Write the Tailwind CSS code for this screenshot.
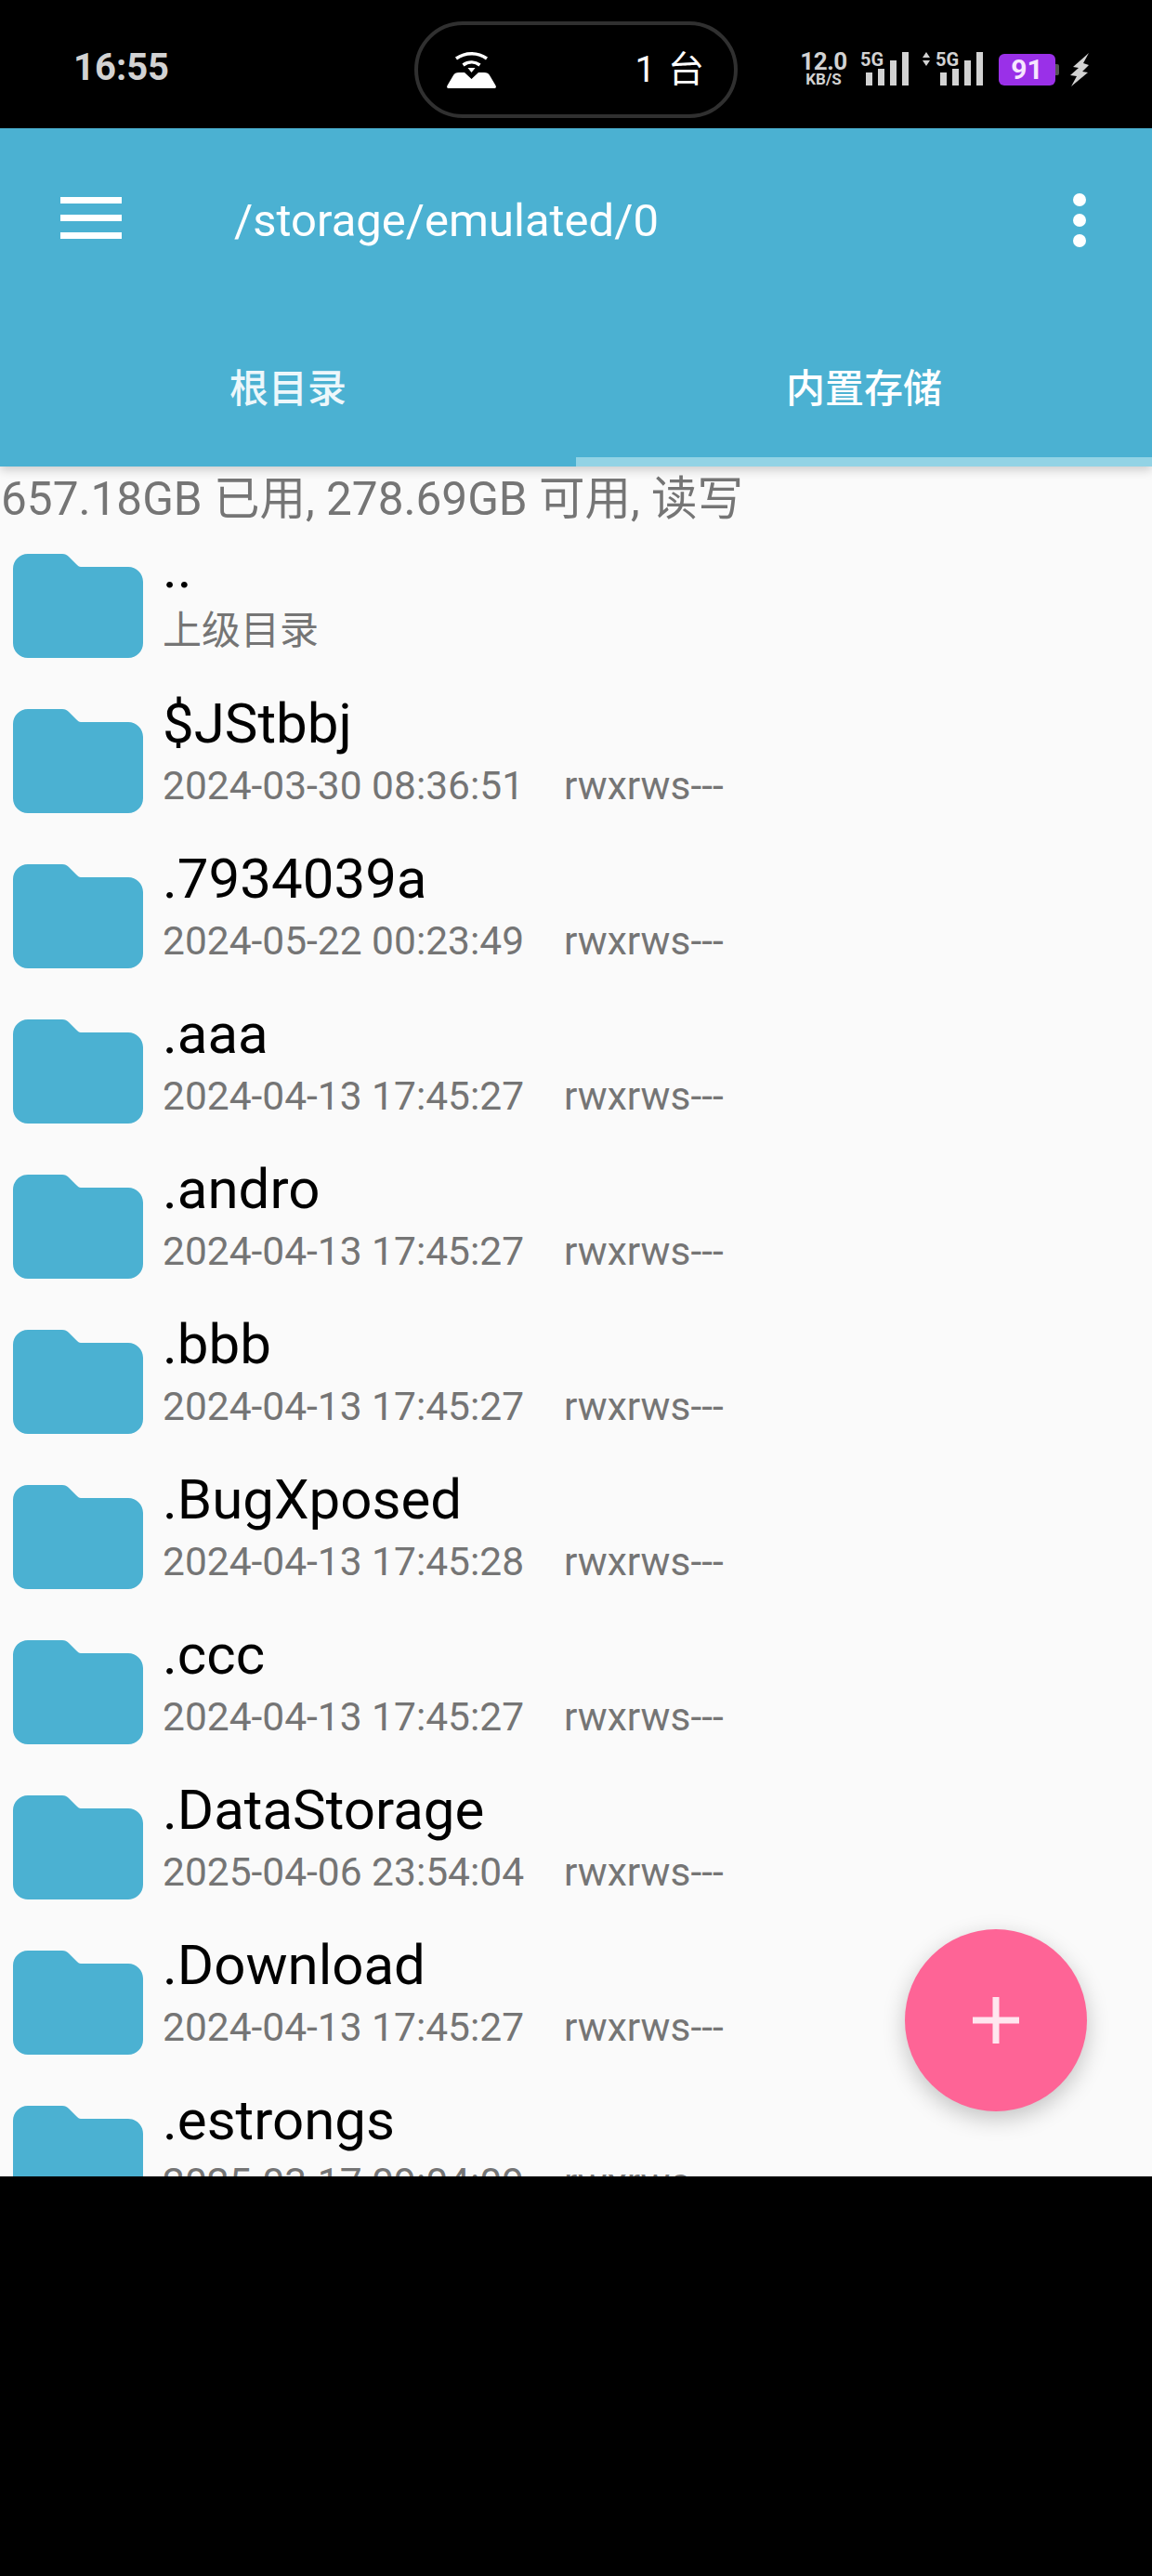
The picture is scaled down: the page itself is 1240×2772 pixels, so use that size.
<!DOCTYPE html>
<html><head><meta charset="utf-8"><script src="https://cdn.jsdelivr.net/npm/@tailwindcss/browser@4"></script></head>
<body class="m-0 bg-black">
<div class="relative w-[1240px] h-[2772px] bg-black overflow-hidden font-['Roboto','Noto_Sans_CJK_SC',sans-serif]">
  <div class="relative h-[138px] flex items-center">
    <span class="ml-[79px] mt-[8px] text-[40px] leading-none font-bold text-[#d2d2d2] font-['Roboto',sans-serif]">16:55</span>
    <div class="absolute left-[446px] top-[23px] w-[348px] h-[104px] rounded-[52px] border-[4px] border-[#303030] flex items-center justify-between pl-[31px] pr-[30px]">
      <svg width="53" height="39" viewBox="0 0 53 39"><path d="M10 7C20 0 33 0 43 7" fill="none" stroke="#fff" stroke-width="3.5"/><path d="M17.500 14C23 10 30 10 35.500 14" fill="none" stroke="#fff" stroke-width="3.5"/><path d="M22.500 17h8l-4 5z" fill="#fff"/><path d="M13 22h6l7.500 7 7.500-7h6c3 0 5 1 6 3l6.500 11c1 2 0 3-2 3H2.500c-2 0-3-1-2-3L7 25c1-2 3-3 6-3z" fill="#fff"/></svg>
      <span class="text-[39px] leading-none text-white tracking-[2px] whitespace-nowrap">1 台</span>
    </div>
    <div class="absolute left-[858px] top-[54px] w-[57px] flex flex-col items-center font-bold text-[#d2d2d2] font-['Roboto',sans-serif]">
      <span class="text-[26px] leading-[24px] tracking-[-0.5px]">12.0</span>
      <span class="text-[17px] leading-[14px]">KB/S</span>
    </div>
    <div class="absolute left-[926px] top-[56px] w-[52px] h-[36px]">
      <span class="absolute left-0 top-0 text-[20px] leading-[17px] font-bold text-[#d2d2d2]">5G</span>
      <div class="absolute right-0 bottom-0 flex items-end gap-[6px]">
        <i class="block w-[7px] h-[14px] bg-[#d2d2d2]"></i><i class="block w-[7px] h-[18px] bg-[#d2d2d2]"></i><i class="block w-[7px] h-[27px] bg-[#d2d2d2]"></i><i class="block w-[7px] h-[36px] bg-[#d2d2d2]"></i>
      </div>
    </div>
    <div class="absolute left-[992px] top-[56px] w-[66px] h-[36px]">
      <svg width="10" height="15" viewBox="0 0 10 15" class="absolute left-0 top-0"><path d="M5 0l4 6H1zM5 15L1 9h8z" fill="#d2d2d2"/></svg>
      <span class="absolute left-[15px] top-0 text-[20px] leading-[17px] font-bold text-[#d2d2d2]">5G</span>
      <div class="absolute right-0 bottom-0 flex items-end gap-[6px]">
        <i class="block w-[7px] h-[14px] bg-[#d2d2d2]"></i><i class="block w-[7px] h-[18px] bg-[#d2d2d2]"></i><i class="block w-[7px] h-[27px] bg-[#d2d2d2]"></i><i class="block w-[7px] h-[36px] bg-[#d2d2d2]"></i>
      </div>
    </div>
    <div class="absolute left-[1075px] top-[58px] w-[61px] h-[34px] rounded-[6px] bg-[#9a30e8] flex items-center justify-center text-[30px] leading-none font-bold text-[#f6e6ff]">91</div>
    <i class="absolute left-[1136px] top-[69px] block w-[4px] h-[12px] bg-[#555] rounded-r-[2px]"></i>
    <svg width="20" height="36" viewBox="0 0 20 36" class="absolute left-[1152px] top-[57px]"><path d="M20 0L3 15l6 1-9 8 7 1-6 11 18-15-6-1 7-7-6-2z" fill="#d2d2d2"/></svg>
  </div>

  <div class="relative h-[2204px] bg-[#fafafa] overflow-hidden">
    <header class="relative z-10 h-[364px] bg-[#4bb1d2] shadow-[0_4px_10px_rgba(0,0,0,0.18)]">
      <div class="relative h-[198px]">
        <div class="absolute left-[65px] top-[74px] w-[66px] flex flex-col gap-[12px]">
          <i class="block h-[7px] bg-white"></i><i class="block h-[7px] bg-white"></i><i class="block h-[7px] bg-white"></i>
        </div>
        <span class="absolute left-[252px] top-[72px] text-[49px] leading-[56px] text-white whitespace-nowrap">/storage/emulated/0</span>
        <div class="absolute left-[1155px] top-[70px] flex flex-col gap-[8px]">
          <i class="block w-[14px] h-[14px] rounded-full bg-white"></i><i class="block w-[14px] h-[14px] rounded-full bg-white"></i><i class="block w-[14px] h-[14px] rounded-full bg-white"></i>
        </div>
      </div>
      <div class="flex h-[166px]">
        <div class="w-[620px] h-full flex justify-center pt-[59px] text-[42px] leading-[48px] font-medium text-white/90">根目录</div>
        <div class="relative w-[620px] h-full flex justify-center pt-[59px] text-[42px] leading-[48px] font-medium text-white">内置存储
          <i class="absolute left-0 right-0 bottom-0 block h-[10px] bg-[#92d3e5]"></i>
        </div>
      </div>
    </header>

    <div class="h-[76px] pt-[7px] pl-[1px] text-[49.5px] leading-[56px] text-[#757575] whitespace-nowrap">657.18GB 已用, 278.69GB 可用, 读写</div>

    <div class="flex flex-col">
      <div class="flex h-[167px] pl-[14px]">
        <svg width="140" height="112" viewBox="0 0 140 112" class="mt-[18px] shrink-0"><path d="M16 0h37c3 0 5 1 7 3l8 8c2 2 3 3 5 3h51c8.800 0 16 7.200 16 16v66c0 8.800-7.200 16-16 16H16c-8.800 0-16-7.200-16-16V16C0 7.200 7.200 0 16 0z" fill="#4bb1d2"/></svg>
        <div class="ml-[21px] min-w-0">
          <div class="h-[78px] -mt-[1px] text-[60px] leading-[70px] text-black">..</div>
          <div class="text-[42px] leading-[48px] text-[#757575]">上级目录</div>
        </div>
      </div>
      <div class="flex h-[167px] pl-[14px]">
        <svg width="140" height="112" viewBox="0 0 140 112" class="mt-[18px] shrink-0"><path d="M16 0h37c3 0 5 1 7 3l8 8c2 2 3 3 5 3h51c8.800 0 16 7.200 16 16v66c0 8.800-7.200 16-16 16H16c-8.800 0-16-7.200-16-16V16C0 7.200 7.200 0 16 0z" fill="#4bb1d2"/></svg>
        <div class="ml-[21px] min-w-0">
          <div class="h-[78px] -mt-[1px] text-[60px] leading-[70px] text-black">$JStbbj</div>
          <div class="flex text-[42.5px] leading-[48px] text-[#757575]"><span class="w-[432px]">2024-03-30 08:36:51</span><span>rwxrws---</span></div>
        </div>
      </div>
      <div class="flex h-[167px] pl-[14px]">
        <svg width="140" height="112" viewBox="0 0 140 112" class="mt-[18px] shrink-0"><path d="M16 0h37c3 0 5 1 7 3l8 8c2 2 3 3 5 3h51c8.800 0 16 7.200 16 16v66c0 8.800-7.200 16-16 16H16c-8.800 0-16-7.200-16-16V16C0 7.200 7.200 0 16 0z" fill="#4bb1d2"/></svg>
        <div class="ml-[21px] min-w-0">
          <div class="h-[78px] -mt-[1px] text-[60px] leading-[70px] text-black">.7934039a</div>
          <div class="flex text-[42.5px] leading-[48px] text-[#757575]"><span class="w-[432px]">2024-05-22 00:23:49</span><span>rwxrws---</span></div>
        </div>
      </div>
      <div class="flex h-[167px] pl-[14px]">
        <svg width="140" height="112" viewBox="0 0 140 112" class="mt-[18px] shrink-0"><path d="M16 0h37c3 0 5 1 7 3l8 8c2 2 3 3 5 3h51c8.800 0 16 7.200 16 16v66c0 8.800-7.200 16-16 16H16c-8.800 0-16-7.200-16-16V16C0 7.200 7.200 0 16 0z" fill="#4bb1d2"/></svg>
        <div class="ml-[21px] min-w-0">
          <div class="h-[78px] -mt-[1px] text-[60px] leading-[70px] text-black">.aaa</div>
          <div class="flex text-[42.5px] leading-[48px] text-[#757575]"><span class="w-[432px]">2024-04-13 17:45:27</span><span>rwxrws---</span></div>
        </div>
      </div>
      <div class="flex h-[167px] pl-[14px]">
        <svg width="140" height="112" viewBox="0 0 140 112" class="mt-[18px] shrink-0"><path d="M16 0h37c3 0 5 1 7 3l8 8c2 2 3 3 5 3h51c8.800 0 16 7.200 16 16v66c0 8.800-7.200 16-16 16H16c-8.800 0-16-7.200-16-16V16C0 7.200 7.200 0 16 0z" fill="#4bb1d2"/></svg>
        <div class="ml-[21px] min-w-0">
          <div class="h-[78px] -mt-[1px] text-[60px] leading-[70px] text-black">.andro</div>
          <div class="flex text-[42.5px] leading-[48px] text-[#757575]"><span class="w-[432px]">2024-04-13 17:45:27</span><span>rwxrws---</span></div>
        </div>
      </div>
      <div class="flex h-[167px] pl-[14px]">
        <svg width="140" height="112" viewBox="0 0 140 112" class="mt-[18px] shrink-0"><path d="M16 0h37c3 0 5 1 7 3l8 8c2 2 3 3 5 3h51c8.800 0 16 7.200 16 16v66c0 8.800-7.200 16-16 16H16c-8.800 0-16-7.200-16-16V16C0 7.200 7.200 0 16 0z" fill="#4bb1d2"/></svg>
        <div class="ml-[21px] min-w-0">
          <div class="h-[78px] -mt-[1px] text-[60px] leading-[70px] text-black">.bbb</div>
          <div class="flex text-[42.5px] leading-[48px] text-[#757575]"><span class="w-[432px]">2024-04-13 17:45:27</span><span>rwxrws---</span></div>
        </div>
      </div>
      <div class="flex h-[167px] pl-[14px]">
        <svg width="140" height="112" viewBox="0 0 140 112" class="mt-[18px] shrink-0"><path d="M16 0h37c3 0 5 1 7 3l8 8c2 2 3 3 5 3h51c8.800 0 16 7.200 16 16v66c0 8.800-7.200 16-16 16H16c-8.800 0-16-7.200-16-16V16C0 7.200 7.200 0 16 0z" fill="#4bb1d2"/></svg>
        <div class="ml-[21px] min-w-0">
          <div class="h-[78px] -mt-[1px] text-[60px] leading-[70px] text-black">.BugXposed</div>
          <div class="flex text-[42.5px] leading-[48px] text-[#757575]"><span class="w-[432px]">2024-04-13 17:45:28</span><span>rwxrws---</span></div>
        </div>
      </div>
      <div class="flex h-[167px] pl-[14px]">
        <svg width="140" height="112" viewBox="0 0 140 112" class="mt-[18px] shrink-0"><path d="M16 0h37c3 0 5 1 7 3l8 8c2 2 3 3 5 3h51c8.800 0 16 7.200 16 16v66c0 8.800-7.200 16-16 16H16c-8.800 0-16-7.200-16-16V16C0 7.200 7.200 0 16 0z" fill="#4bb1d2"/></svg>
        <div class="ml-[21px] min-w-0">
          <div class="h-[78px] -mt-[1px] text-[60px] leading-[70px] text-black">.ccc</div>
          <div class="flex text-[42.5px] leading-[48px] text-[#757575]"><span class="w-[432px]">2024-04-13 17:45:27</span><span>rwxrws---</span></div>
        </div>
      </div>
      <div class="flex h-[167px] pl-[14px]">
        <svg width="140" height="112" viewBox="0 0 140 112" class="mt-[18px] shrink-0"><path d="M16 0h37c3 0 5 1 7 3l8 8c2 2 3 3 5 3h51c8.800 0 16 7.200 16 16v66c0 8.800-7.200 16-16 16H16c-8.800 0-16-7.200-16-16V16C0 7.200 7.200 0 16 0z" fill="#4bb1d2"/></svg>
        <div class="ml-[21px] min-w-0">
          <div class="h-[78px] -mt-[1px] text-[60px] leading-[70px] text-black">.DataStorage</div>
          <div class="flex text-[42.5px] leading-[48px] text-[#757575]"><span class="w-[432px]">2025-04-06 23:54:04</span><span>rwxrws---</span></div>
        </div>
      </div>
      <div class="flex h-[167px] pl-[14px]">
        <svg width="140" height="112" viewBox="0 0 140 112" class="mt-[18px] shrink-0"><path d="M16 0h37c3 0 5 1 7 3l8 8c2 2 3 3 5 3h51c8.800 0 16 7.200 16 16v66c0 8.800-7.200 16-16 16H16c-8.800 0-16-7.200-16-16V16C0 7.200 7.200 0 16 0z" fill="#4bb1d2"/></svg>
        <div class="ml-[21px] min-w-0">
          <div class="h-[78px] -mt-[1px] text-[60px] leading-[70px] text-black">.Download</div>
          <div class="flex text-[42.5px] leading-[48px] text-[#757575]"><span class="w-[432px]">2024-04-13 17:45:27</span><span>rwxrws---</span></div>
        </div>
      </div>
      <div class="flex h-[167px] pl-[14px]">
        <svg width="140" height="112" viewBox="0 0 140 112" class="mt-[18px] shrink-0"><path d="M16 0h37c3 0 5 1 7 3l8 8c2 2 3 3 5 3h51c8.800 0 16 7.200 16 16v66c0 8.800-7.200 16-16 16H16c-8.800 0-16-7.200-16-16V16C0 7.200 7.200 0 16 0z" fill="#4bb1d2"/></svg>
        <div class="ml-[21px] min-w-0">
          <div class="h-[78px] -mt-[1px] text-[60px] leading-[70px] text-black">.estrongs</div>
          <div class="flex text-[42.5px] leading-[48px] text-[#757575]"><span class="w-[432px]">2025-03-17 09:04:09</span><span>rwxrws---</span></div>
        </div>
      </div>
    </div>

    <button class="absolute left-[974px] top-[1938px] w-[196px] h-[196px] rounded-full bg-[#fe6496] shadow-[0_8px_24px_rgba(0,0,0,0.22)] flex items-center justify-center">
      <svg width="50" height="50" viewBox="0 0 50 50"><path d="M21.500 0h7v21.500H50v7H28.500V50h-7V28.500H0v-7h21.500z" fill="#ffe6ef"/></svg>
    </button>
  </div>
</div>
</body></html>
